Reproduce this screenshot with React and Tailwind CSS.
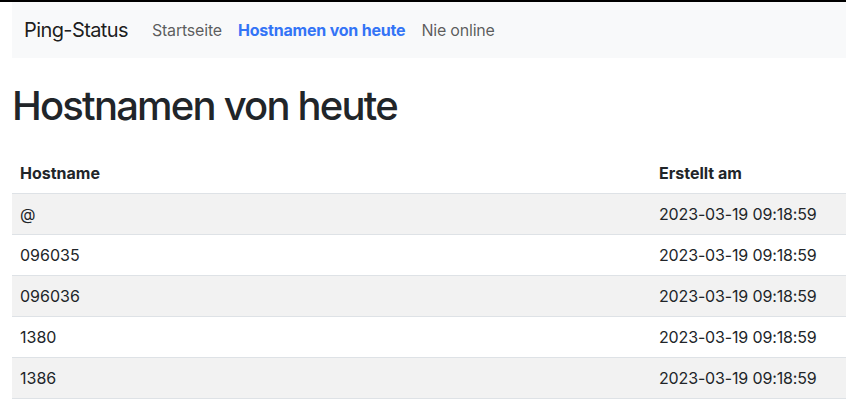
import React from "react";

const rows = [
  { host: "@", created: "2023-03-19 09:18:59" },
  { host: "096035", created: "2023-03-19 09:18:59" },
  { host: "096036", created: "2023-03-19 09:18:59" },
  { host: "1380", created: "2023-03-19 09:18:59" },
  { host: "1386", created: "2023-03-19 09:18:59" },
];

function Navbar() {
  return (
    <nav className="ml-3 h-[56px] bg-[#f8f9fa] px-3 flex items-center">
      <span className="text-[20px] tracking-[-0.6px] text-[#000000e6] mr-4">Ping-Status</span>
      <div className="flex items-center text-[16px] tracking-[-0.2px]">
        <a className="px-2 text-[#000000a6]">Startseite</a>
        <a className="px-2 font-bold text-[#3374f6]">Hostnamen von heute</a>
        <a className="px-2 text-[#000000a6]">Nie online</a>
      </div>
    </nav>
  );
}

export default function App() {
  return (
    <div className="h-screen bg-white text-[#212529] font-['Inter','Liberation_Sans',sans-serif] overflow-hidden">
      <div className="h-[2px] bg-black" />
      <Navbar />
      <div className="pl-3">
        <h1 className="mt-6 mb-[23px] text-[40px] leading-[48px] font-medium tracking-[-1.8px]">Hostnamen von heute</h1>
        <div className="text-[16px]">
          <div className="grid grid-cols-[639px_1fr] h-[41px] items-center border-b border-[#dee2e6] font-bold">
            <div className="px-2">Hostname</div>
            <div className="px-2">Erstellt am</div>
          </div>
          {rows.map((row, i) => (
            <div
              key={i}
              className={
                "grid grid-cols-[639px_1fr] h-[41px] items-center border-b border-[#dee2e6] " +
                (i % 2 === 0 ? "bg-[#f2f2f2]" : "bg-white")
              }
            >
              <div className="px-2">{row.host}</div>
              <div className="px-2 tracking-[-0.15px]">{row.created}</div>
            </div>
          ))}
        </div>
      </div>
    </div>
  );
}
